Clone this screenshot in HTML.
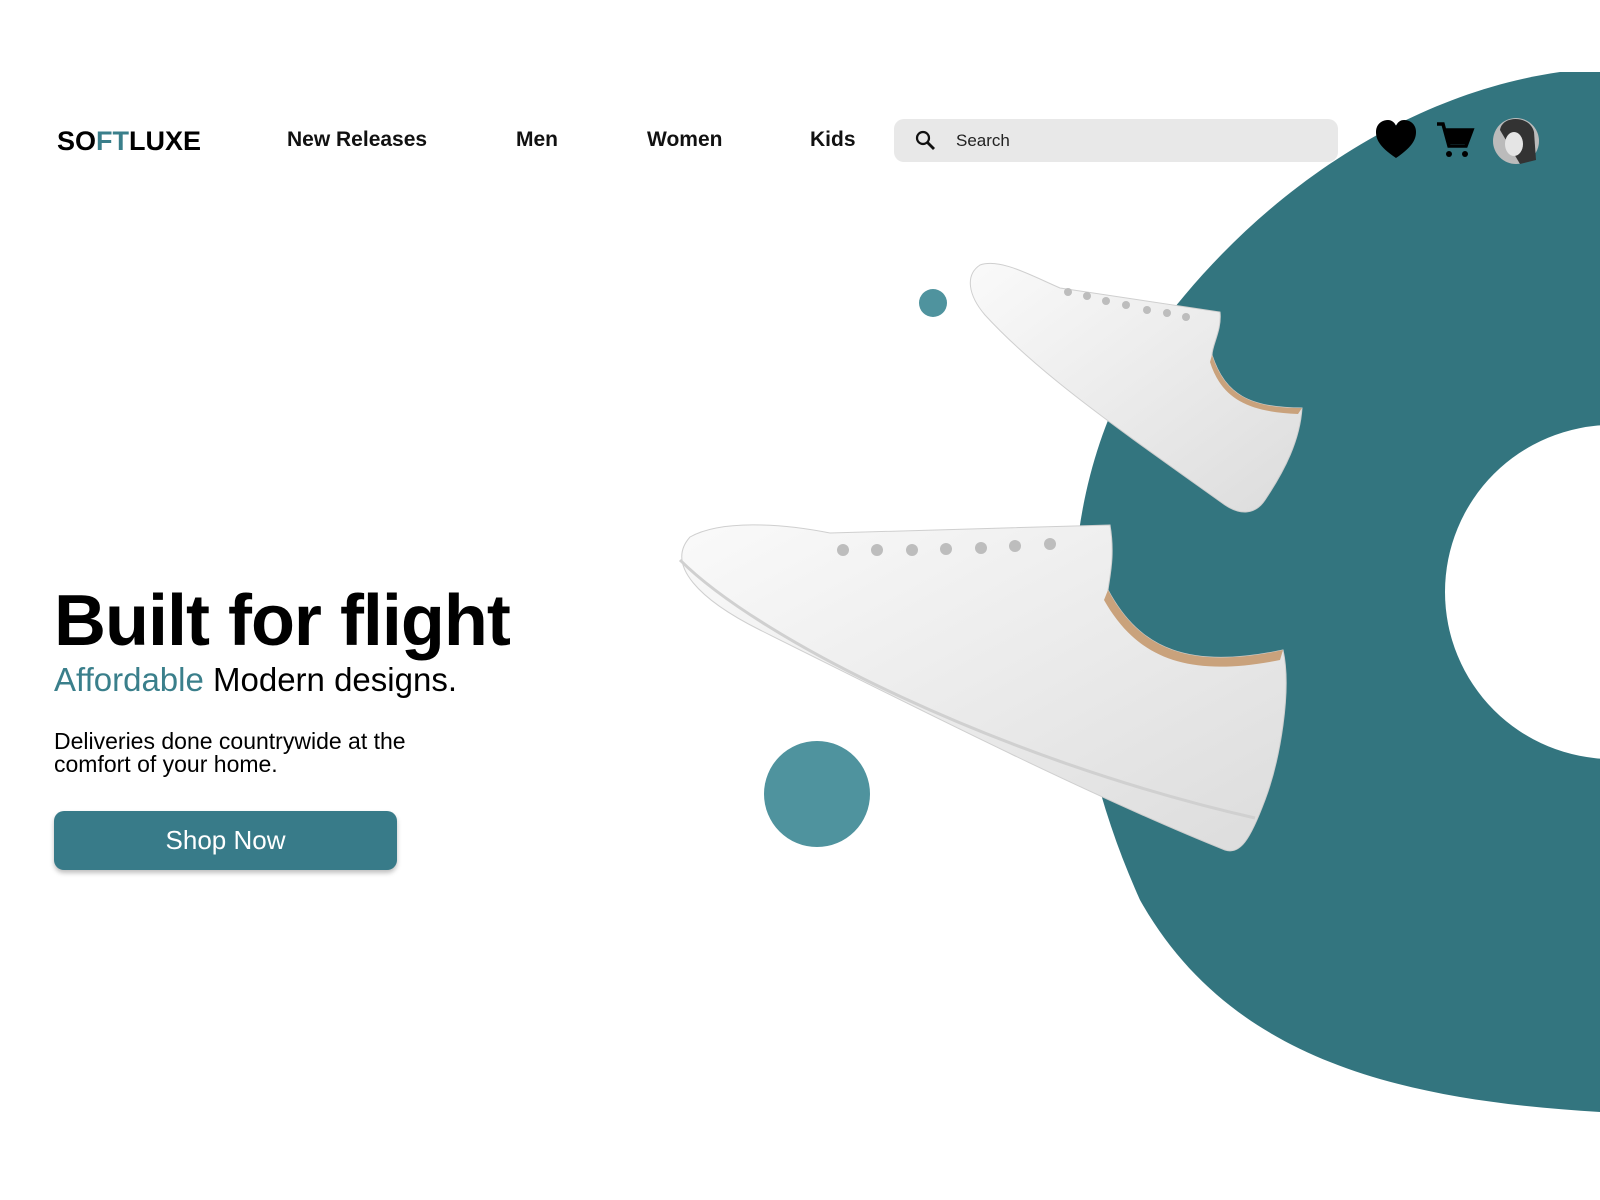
<!DOCTYPE html>
<html><head><meta charset="utf-8"><style>
body{margin:0;width:1600px;height:1200px;overflow:hidden;background:#fff;font-family:"Liberation Sans",sans-serif;position:relative}
.a{position:absolute;white-space:nowrap}
.nav{font-size:21px;font-weight:bold;color:#111;top:128px}
</style></head><body>
<svg class="a" style="left:0;top:0" width="1600" height="1200">
<defs>
<linearGradient id="g1" x1="0" y1="0" x2="1" y2="1"><stop offset="0" stop-color="#fafafa"/><stop offset="1" stop-color="#dcdcdc"/></linearGradient>
</defs>
<path d="M1600,72 L1560,72 C1400,95 1250,200 1150,340 C1050,490 1050,700 1140,900 C1230,1060 1400,1100 1600,1112 Z" fill="#33757f"/>
<circle cx="1612" cy="592" r="167" fill="#fff"/>
<circle cx="933" cy="303" r="14" fill="#4f939e"/>
<circle cx="817" cy="794" r="53" fill="#4f939e"/>
<path d="M980,265 C1000,258 1030,275 1060,288 L1220,312 C1222,330 1212,345 1212,355 C1225,395 1250,408 1302,408 C1300,440 1285,470 1265,500 C1255,515 1240,515 1225,505 C1120,430 1040,375 985,315 C968,295 965,275 980,265 Z" fill="url(#g1)" stroke="#cfcfcf"/>
<path d="M1212,355 C1225,395 1250,408 1302,408 L1298,414 C1250,412 1222,400 1210,362 Z" fill="#c9a27c"/>
<path d="M690,537 C720,520 780,523 830,533 L1110,525 C1115,555 1110,575 1108,590 C1140,650 1190,670 1283,650 C1292,690 1280,760 1265,800 C1250,840 1240,855 1225,850 C1100,800 940,720 760,630 C700,600 665,565 690,537 Z" fill="url(#g1)" stroke="#cfcfcf"/>
<path d="M1108,590 C1140,650 1190,670 1283,650 L1280,660 C1190,678 1138,660 1104,600 Z" fill="#c9a27c"/>
<path d="M680,560 C760,640 1000,760 1255,818" stroke="#d0d0d0" stroke-width="3" fill="none"/>
<g fill="#bdbdbd"><circle cx="843" cy="550" r="6"/><circle cx="877" cy="550" r="6"/><circle cx="912" cy="550" r="6"/><circle cx="946" cy="549" r="6"/><circle cx="981" cy="548" r="6"/><circle cx="1015" cy="546" r="6"/><circle cx="1050" cy="544" r="6"/>
<circle cx="1068" cy="292" r="4"/><circle cx="1087" cy="296" r="4"/><circle cx="1106" cy="301" r="4"/><circle cx="1126" cy="305" r="4"/><circle cx="1147" cy="310" r="4"/><circle cx="1167" cy="313" r="4"/><circle cx="1186" cy="317" r="4"/></g>
<circle cx="923" cy="138" r="6" fill="none" stroke="#111" stroke-width="2.2"/><path d="M927,142 L934,149" stroke="#111" stroke-width="2.8"/>
<path d="M1396,158 C1378,146 1376,138 1376,132 C1376,124 1382,120 1388,120 C1392,120 1395,123 1396,126 C1397,123 1400,120 1404,120 C1410,120 1416,124 1416,132 C1416,138 1414,146 1396,158 Z" fill="#000"/>
<path d="M1437,124 L1443,124 L1449,146 L1466,146 L1472,130 L1446,130" fill="none" stroke="#000" stroke-width="3.5"/>
<path d="M1446,131 L1471,131 L1466,144 L1449,144 Z" fill="#000"/>
<circle cx="1449" cy="154" r="3" fill="#000"/><circle cx="1465" cy="154" r="3" fill="#000"/>
<circle cx="1516" cy="141" r="23" fill="#bbb"/>
<path d="M1500,130 C1502,115 1530,115 1534,132 L1536,160 L1520,164 Z" fill="#333"/>
<ellipse cx="1514" cy="144" rx="9" ry="12" fill="#e5e5e5"/>
</svg>
<div class="a" style="left:57px;top:126px;font-size:27px;font-weight:900">SO<span style="color:#3a7f8b">FT</span>LUXE</div>
<div class="a nav" style="left:287px">New Releases</div>
<div class="a nav" style="left:516px">Men</div>
<div class="a nav" style="left:647px">Women</div>
<div class="a nav" style="left:810px">Kids</div>
<div class="a" style="left:894px;top:119px;width:444px;height:43px;background:#e8e8e8;border-radius:10px;z-index:-1"></div>
<div class="a" style="left:956px;top:131px;font-size:17px;color:#222">Search</div>
<div class="a" style="left:54px;top:580px;font-size:72px;font-weight:900;letter-spacing:-1px;color:#000">Built for flight</div>
<div class="a" style="left:54px;top:661px;font-size:33px;color:#000"><span style="color:#3a7f8b">Affordable</span> Modern designs.</div>
<div class="a" style="left:54px;top:730px;font-size:23px;line-height:23px;color:#000">Deliveries done countrywide at the<br>comfort of your home.</div>
<div class="a" style="left:54px;top:811px;width:343px;height:59px;background:#387b89;border-radius:10px;box-shadow:0 3px 5px rgba(0,0,0,.25);color:#fff;font-size:26px;text-align:center;line-height:59px">Shop Now</div>
</body></html>
